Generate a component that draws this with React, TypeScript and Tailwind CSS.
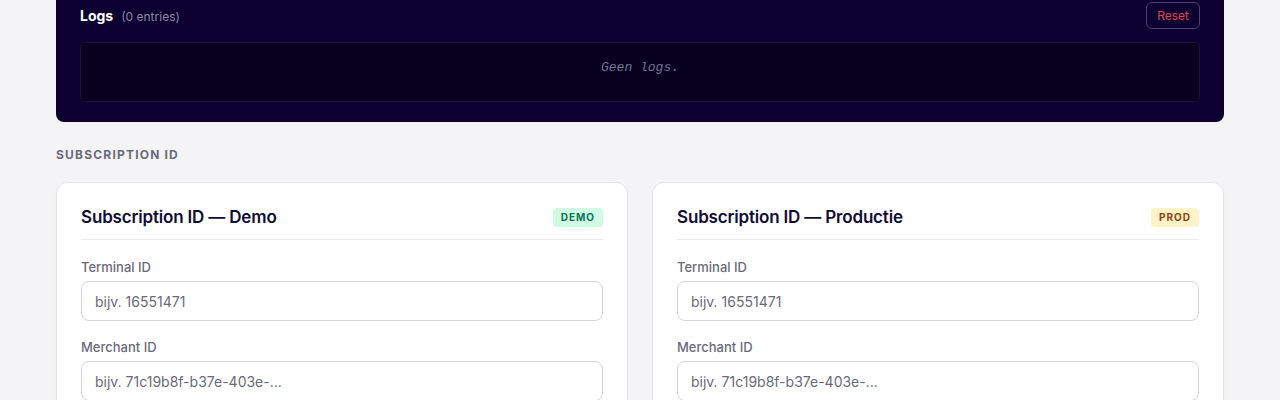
import React from 'react';

const Field: React.FC<{ label: string; placeholder: string }> = ({ label, placeholder }) => (
  <div>
    <label className="block text-[13px] leading-5 font-medium text-[#6b6a7b] mb-1">{label}</label>
    <input
      type="text"
      placeholder={placeholder}
      className="w-full h-10 px-[13px] rounded-lg border border-[#d4d4dc] bg-white text-sm text-[#1a1838] placeholder:text-[#6b6a78] outline-none"
    />
  </div>
);

const SubscriptionCard: React.FC<{ title: string; badge: string; badgeClass: string }> = ({ title, badge, badgeClass }) => (
  <div className="bg-white rounded-xl border border-[#e4e4ea] shadow-[0_1px_2px_rgba(16,12,48,0.04)] px-6 pt-6 pb-6">
    <div className="flex items-center justify-between pb-3 border-b border-[#ececf0]">
      <h3 className="text-[17px] leading-5 font-semibold tracking-[-0.01em] text-[#110c33]">{title}</h3>
      <span className={`px-2 h-[19px] flex items-center rounded text-[10px] font-bold tracking-widest ${badgeClass}`}>{badge}</span>
    </div>
    <div className="mt-[17px] space-y-4">
      <Field label="Terminal ID" placeholder="bijv. 16551471" />
      <Field label="Merchant ID" placeholder="bijv. 71c19b8f-b37e-403e-..." />
    </div>
  </div>
);

export default function App() {
  return (
    <div className="min-h-screen bg-[#f4f4f6] font-['Inter',sans-serif] overflow-hidden">
      <div className="max-w-[1168px] mx-auto -mt-[22px]">
        {/* Logs panel */}
        <div className="bg-[#0b0030] rounded-lg px-6 pt-6 pb-[20px]">
          <div className="flex items-center justify-between">
            <div className="flex items-baseline gap-2">
              <h4 className="text-sm font-bold text-white">Logs</h4>
              <span className="text-xs text-[#8b88a8]">(0 entries)</span>
            </div>
            <button className="h-[27px] px-[10px] rounded-md border border-[#4a4570] text-xs text-[#e0434f]">Reset</button>
          </div>
          <div className="mt-[13px] h-[60px] rounded-md bg-[#07001f] border border-[#1c1540] pt-[15px] text-center font-['Liberation_Mono',monospace] italic text-[13px] leading-5 text-[#77738f]">
            Geen logs.
          </div>
        </div>

        {/* Subscription ID */}
        <h2 className="mt-[25px] text-xs leading-4 font-bold tracking-[0.1em] text-[#6b6a7b]">SUBSCRIPTION ID</h2>
        <div className="mt-[19px] grid grid-cols-2 gap-6">
          <SubscriptionCard title="Subscription ID — Demo" badge="DEMO" badgeClass="bg-[#d1fae5] text-[#047857]" />
          <SubscriptionCard title="Subscription ID — Productie" badge="PROD" badgeClass="bg-[#fef3c7] text-[#92400e]" />
        </div>
      </div>
    </div>
  );
}
